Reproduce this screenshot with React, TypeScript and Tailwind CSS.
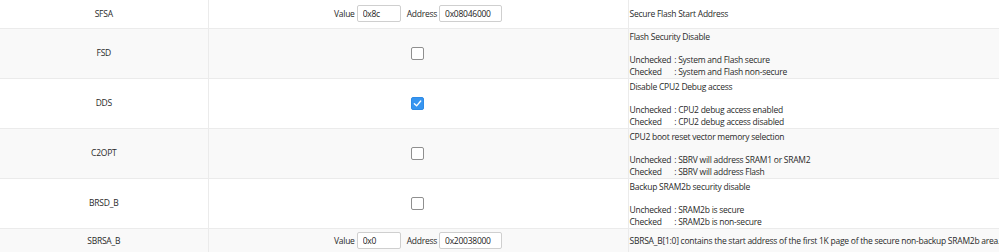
import { useState } from 'react'

type Row = {
  name: string
  kind: 'value' | 'check'
  value?: string
  address?: string
  checked?: boolean
  title: string
  unchecked?: string
  checkedText?: string
}

const rows: Row[] = [
  { name: 'SFSA', kind: 'value', value: '0x8c', address: '0x08046000', title: 'Secure Flash Start Address' },
  {
    name: 'FSD',
    kind: 'check',
    checked: false,
    title: 'Flash Security Disable',
    unchecked: 'System and Flash secure',
    checkedText: 'System and Flash non-secure',
  },
  {
    name: 'DDS',
    kind: 'check',
    checked: true,
    title: 'Disable CPU2 Debug access',
    unchecked: 'CPU2 debug access enabled',
    checkedText: 'CPU2 debug access disabled',
  },
  {
    name: 'C2OPT',
    kind: 'check',
    checked: false,
    title: 'CPU2 boot reset vector memory selection',
    unchecked: 'SBRV will address SRAM1 or SRAM2',
    checkedText: 'SBRV will address Flash',
  },
  {
    name: 'BRSD_B',
    kind: 'check',
    checked: false,
    title: 'Backup SRAM2b security disable',
    unchecked: 'SRAM2b is secure',
    checkedText: 'SRAM2b is non-secure',
  },
  {
    name: 'SBRSA_B',
    kind: 'value',
    value: '0x0',
    address: '0x20038000',
    title: 'SBRSA_B[1:0] contains the start address of the first 1K page of the secure non-backup SRAM2b area.',
  },
]

function CheckBox({ initial }: { initial: boolean }) {
  const [on, setOn] = useState(initial)
  return (
    <button
      type="button"
      onClick={() => setOn(!on)}
      className={
        on
          ? 'flex h-[13px] w-[13px] items-center justify-center rounded-[2px] border border-[#2f8be6] bg-[#3795f0]'
          : 'h-[13px] w-[13px] rounded-[2px] border border-[#8f8f8f] bg-white'
      }
    >
      {on && (
        <svg width="9" height="9" viewBox="0 0 10 10" fill="none">
          <path d="M1.5 5.2 L4 7.6 L8.6 2.2" stroke="white" strokeWidth="1.5" strokeLinecap="round" strokeLinejoin="round" />
        </svg>
      )}
    </button>
  )
}

function Field({ label, value, width }: { label: string; value: string; width: string }) {
  return (
    <div className="flex items-center gap-[2px]">
      <span>{label}</span>
      <input
        defaultValue={value}
        className={`h-[17px] ${width} rounded-[2px] border border-[#cfcfcf] bg-white px-[5px] text-[#222] outline-none`}
      />
    </div>
  )
}

export default function App() {
  return (
    <div
      className="w-[999px] overflow-hidden bg-white text-[8.5px] leading-[11.5px] tracking-[-0.25px] text-[#2a2a2a]"
      style={{ fontFamily: '"Open Sans", "Noto Sans", sans-serif' }}
    >
      <table className="w-full table-fixed border-collapse">
        <colgroup>
          <col className="w-[208px]" />
          <col className="w-[420px]" />
          <col />
        </colgroup>
        <tbody>
          {rows.map((r, i) => (
            <tr
              key={r.name}
              className={
                (i % 2 === 1 ? 'bg-[#f9f9f9] ' : 'bg-white ') +
                (r.kind === 'check' ? 'h-[50px]' : i === 0 ? 'h-[28px]' : 'h-[25px]')
              }
            >
              <td className="border-r border-b border-[#ebebeb] p-0 text-center align-middle">{r.name}</td>
              <td className="border-r border-b border-[#ebebeb] p-0 align-middle">
                {r.kind === 'value' ? (
                  <div className="flex items-center justify-center gap-[6px]">
                    <Field label="Value" value={r.value!} width="w-[44px]" />
                    <Field label="Address" value={r.address!} width="w-[63px]" />
                  </div>
                ) : (
                  <div className="flex justify-center pr-[2px]">
                    <CheckBox initial={!!r.checked} />
                  </div>
                )}
              </td>
              <td className="border-b border-[#ebebeb] p-0 pl-[1px] align-middle">
                {r.kind === 'value' ? (
                  <div className="whitespace-nowrap">{r.title}</div>
                ) : (
                  <div className="whitespace-nowrap pt-[2px]">
                    <div>{r.title}</div>
                    <div className="h-[11.5px]" />
                    <div className="grid grid-cols-[auto_1fr] gap-x-[3px]">
                      <span>Unchecked</span>
                      <span>: {r.unchecked}</span>
                      <span>Checked</span>
                      <span>: {r.checkedText}</span>
                    </div>
                  </div>
                )}
              </td>
            </tr>
          ))}
        </tbody>
      </table>
    </div>
  )
}
